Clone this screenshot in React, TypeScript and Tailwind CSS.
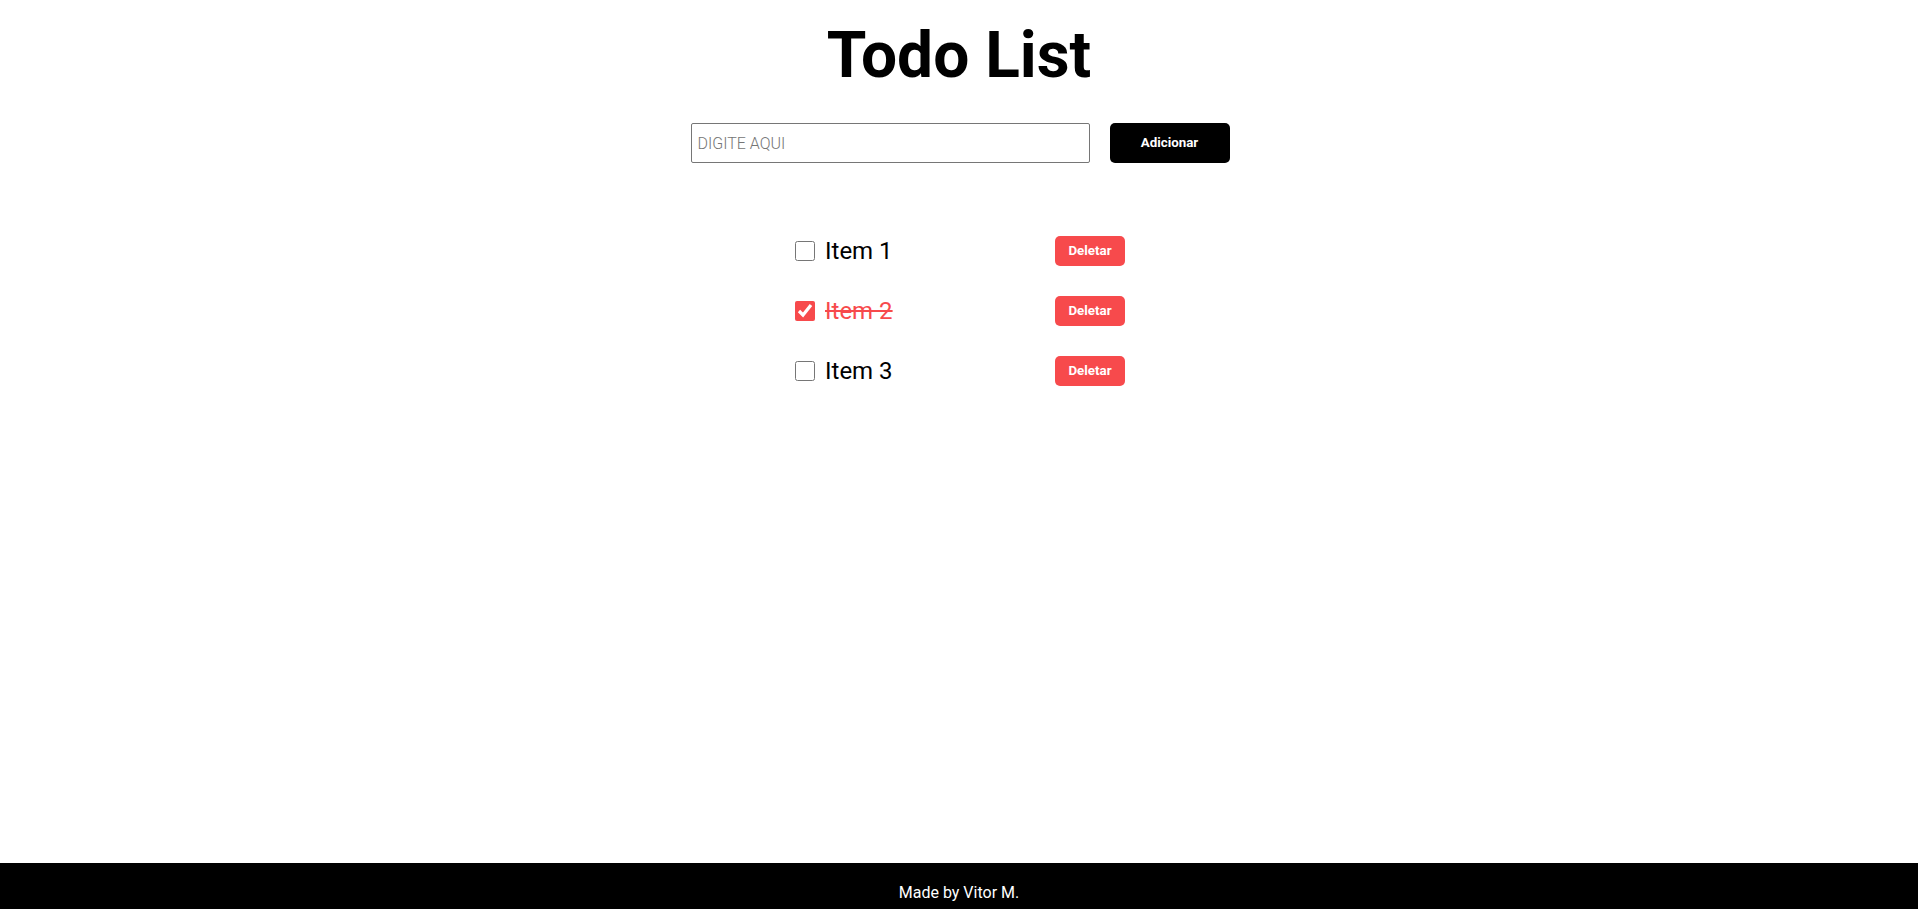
import { useState } from "react";

type Todo = { id: number; text: string; done: boolean };

const initial: Todo[] = [
  { id: 1, text: "Item 1", done: false },
  { id: 2, text: "Item 2", done: true },
  { id: 3, text: "Item 3", done: false },
];

export default function App() {
  const [todos, setTodos] = useState<Todo[]>(initial);
  const [value, setValue] = useState("");

  const add = () => {
    if (!value.trim()) return;
    setTodos([...todos, { id: Date.now(), text: value, done: false }]);
    setValue("");
  };

  return (
    <div className="flex min-h-screen flex-col bg-white font-['Roboto',sans-serif] text-black">
      <main className="flex-1">
        <h1 className="mt-[18px] text-center text-[64px] font-bold leading-[75px]">Todo List</h1>

        <div className="mt-[30px] flex justify-center gap-5 pl-[2px]">
          <input
            value={value}
            onChange={(e) => setValue(e.target.value)}
            placeholder="DIGITE AQUI"
            className="h-10 w-[399px] rounded-[2px] border border-[#767676] px-[6px] text-base font-light outline-none placeholder:text-[#757575]"
          />
          <button
            onClick={add}
            className="h-10 w-[120px] rounded-[5px] bg-black text-[13.333px] font-bold text-white"
          >
            Adicionar
          </button>
        </div>

        <ul className="mx-auto mt-[58px] w-[332px] pl-[2px]">
          {todos.map((t) => (
            <li key={t.id} className="flex h-[60px] items-center justify-between">
              <label className="flex items-center gap-[10px]">
                <input
                  type="checkbox"
                  checked={t.done}
                  onChange={() =>
                    setTodos(todos.map((x) => (x.id === t.id ? { ...x, done: !x.done } : x)))
                  }
                  className="m-0 h-5 w-5 accent-[#f74a4c]"
                />
                <span
                  className={
                    t.done
                      ? "text-2xl leading-7 text-[#f74a4c] line-through"
                      : "text-2xl leading-7"
                  }
                >
                  {t.text}
                </span>
              </label>
              <button
                onClick={() => setTodos(todos.filter((x) => x.id !== t.id))}
                className="h-[30px] w-[70px] rounded-[5px] bg-[#f74a4c] text-[13.333px] font-bold text-white"
              >
                Deletar
              </button>
            </li>
          ))}
        </ul>
      </main>

      <footer className="h-[46px] bg-black pt-[18px] text-center text-base leading-6 text-white">
        Made by Vitor M.
      </footer>
    </div>
  );
}
